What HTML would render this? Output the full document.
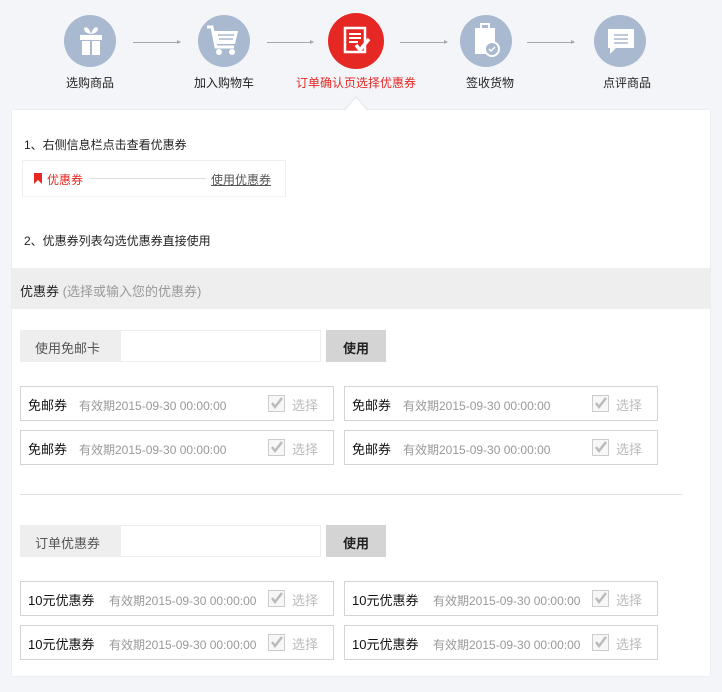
<!DOCTYPE html>
<html><head><meta charset="utf-8"><style>
*{margin:0;padding:0;box-sizing:border-box}
body{width:722px;height:692px;background:#f4f5f9;font-family:"Liberation Sans","Noto Sans CJK SC",sans-serif;font-size:12px;color:#222;position:relative;overflow:hidden}
.a{position:absolute}
.panel{left:12px;top:110px;width:698px;height:566px;background:#fff;box-shadow:0 0 2px #e0e2e8}
.c{border-radius:50%;background:#a9b9cf}
.lbl{top:74px;font-size:12px;width:140px;text-align:center}
.ar{height:1px;background:#a8a8a8;top:42px}
.ar:after{content:"";position:absolute;right:-1px;top:-2px;border-left:4px solid #a8a8a8;border-top:2.5px solid transparent;border-bottom:2.5px solid transparent}
.cp{width:314px;height:35px;border:1px solid #d4d4d4;background:#fff}
.cp .n{position:absolute;left:7px;top:8px;font-size:13px;color:#111}
.cp .d{position:absolute;top:10px;font-size:12px;color:#999}
.cp .s{position:absolute;right:15px;top:8px;font-size:13px;color:#bbb}
.cp svg{position:absolute;right:48px;top:8px}
.ip{height:32px}
</style></head><body>
<div class="a c" style="left:64px;top:15px;width:52px;height:52px"></div>
<svg class="a" style="left:78px;top:24px" width="26" height="34"><path d="M6 4q4-3 7 6q3-9 7-6q0 5-7 6q-7-1-7-6z" fill="#fff"/><rect x="2" y="11" width="22" height="5" fill="#fff"/><rect x="4" y="17" width="8" height="14" fill="#fff"/><rect x="14" y="17" width="8" height="14" fill="#fff"/></svg>
<div class="a c" style="left:198px;top:15px;width:52px;height:52px"></div>
<svg class="a" style="left:204px;top:24px" width="40" height="34"><path d="M3 3h5l4 20h18" stroke="#fff" stroke-width="3" fill="none"/><path d="M10 7h24l-3 13H13z" fill="#fff"/><path d="M14 11h16M15 15h14" stroke="#a9b9cf" stroke-width="1.5"/><circle cx="15" cy="28" r="3" fill="#fff"/><circle cx="28" cy="28" r="3" fill="#fff"/></svg>
<div class="a c" style="left:328px;top:13px;width:56px;height:56px;background:#e52824"></div>
<svg class="a" style="left:342px;top:26px" width="30" height="30"><rect x="3" y="2" width="20" height="24" fill="none" stroke="#fff" stroke-width="2.5"/><path d="M7 8h12M7 12h12M7 16h9" stroke="#fff" stroke-width="2"/><path d="M14 19l4 5 9-11" stroke="#fff" stroke-width="3.5" fill="none"/></svg>
<div class="a c" style="left:460px;top:15px;width:52px;height:52px"></div>
<svg class="a" style="left:472px;top:22px" width="30" height="36"><rect x="3" y="6" width="20" height="26" fill="#fff"/><rect x="9" y="2" width="8" height="7" fill="none" stroke="#fff" stroke-width="2"/><circle cx="20" cy="27" r="7" fill="#a9b9cf" stroke="#fff" stroke-width="2"/><path d="M17 27l2 2 4-4" stroke="#fff" stroke-width="1.5" fill="none"/></svg>
<div class="a c" style="left:594px;top:15px;width:52px;height:52px"></div>
<svg class="a" style="left:606px;top:27px" width="30" height="30"><path d="M2 2h26v19H10l-6 6v-6H2z" fill="#fff"/><path d="M8 8h14M8 12h14M8 16h14" stroke="#a9b9cf" stroke-width="1.5"/></svg>
<div class="a ar" style="left:133px;width:47px"></div>
<div class="a ar" style="left:267px;width:46px"></div>
<div class="a ar" style="left:400px;width:47px"></div>
<div class="a ar" style="left:527px;width:47px"></div>
<div class="a lbl" style="left:20px">选购商品</div>
<div class="a lbl" style="left:154px">加入购物车</div>
<div class="a lbl" style="left:286px;color:#e52824">订单确认页选择优惠券</div>
<div class="a lbl" style="left:420px">签收货物</div>
<div class="a lbl" style="left:557px">点评商品</div>
<div class="a panel"></div>
<svg class="a" style="left:344px;top:96px" width="24" height="15"><path d="M0 14.5L12 1l12 13.5" fill="#fff" stroke="#e3e5ea"/><rect x="1" y="14" width="22" height="2" fill="#fff"/></svg>
<div class="a" style="left:24px;top:136px">1、右侧信息栏点击查看优惠券</div>
<div class="a" style="left:22px;top:160px;width:264px;height:37px;border:1px solid #eee;border-bottom-color:#f3f3f3"></div>
<svg class="a" style="left:34px;top:173px" width="8" height="11"><path d="M0 0h8v11L4 7 0 11z" fill="#e52824"/></svg>
<div class="a" style="left:47px;top:171px;color:#e52824">优惠券</div>
<div class="a" style="left:90px;top:178px;width:116px;height:1px;background:#ddd"></div>
<div class="a" style="left:211px;top:171px;color:#555;text-decoration:underline">使用优惠券</div>
<div class="a" style="left:24px;top:232px">2、优惠券列表勾选优惠券直接使用</div>
<div class="a" style="left:12px;top:268px;width:698px;height:41px;background:#eee"></div>
<div class="a" style="left:20px;top:281px;font-size:13px">优惠券 <span style="color:#999">(选择或输入您的优惠券)</span></div>

<div class="a ip" style="left:20px;top:330px;width:100px;background:#eee;color:#555;font-size:13px;padding:8px 0 0 15px">使用免邮卡</div>
<div class="a ip" style="left:120px;top:330px;width:201px;border:1px solid #eee;background:#fff"></div>
<div class="a ip" style="left:326px;top:330px;width:60px;background:#d4d4d4;font-weight:bold;font-size:13px;text-align:center;padding-top:8px">使用</div>

<div class="a cp" style="left:20px;top:386px"><span class="n">免邮券</span><span class="d" style="left:58px">有效期2015-09-30 00:00:00</span><svg width="17" height="17"><rect x=".5" y=".5" width="16" height="16" fill="#f7f7f7" stroke="#ccc"/><path d="M4 8l3 4 7-9" stroke="#bbb" stroke-width="2.5" fill="none"/></svg><span class="s">选择</span></div>
<div class="a cp" style="left:344px;top:386px"><span class="n">免邮券</span><span class="d" style="left:58px">有效期2015-09-30 00:00:00</span><svg width="17" height="17"><rect x=".5" y=".5" width="16" height="16" fill="#f7f7f7" stroke="#ccc"/><path d="M4 8l3 4 7-9" stroke="#bbb" stroke-width="2.5" fill="none"/></svg><span class="s">选择</span></div>
<div class="a cp" style="left:20px;top:430px"><span class="n">免邮券</span><span class="d" style="left:58px">有效期2015-09-30 00:00:00</span><svg width="17" height="17"><rect x=".5" y=".5" width="16" height="16" fill="#f7f7f7" stroke="#ccc"/><path d="M4 8l3 4 7-9" stroke="#bbb" stroke-width="2.5" fill="none"/></svg><span class="s">选择</span></div>
<div class="a cp" style="left:344px;top:430px"><span class="n">免邮券</span><span class="d" style="left:58px">有效期2015-09-30 00:00:00</span><svg width="17" height="17"><rect x=".5" y=".5" width="16" height="16" fill="#f7f7f7" stroke="#ccc"/><path d="M4 8l3 4 7-9" stroke="#bbb" stroke-width="2.5" fill="none"/></svg><span class="s">选择</span></div>

<div class="a" style="left:20px;top:494px;width:662px;height:1px;background:#e2e2e2"></div>

<div class="a ip" style="left:20px;top:525px;width:100px;background:#eee;color:#555;font-size:13px;padding:8px 0 0 15px">订单优惠券</div>
<div class="a ip" style="left:120px;top:525px;width:201px;border:1px solid #eee;background:#fff"></div>
<div class="a ip" style="left:326px;top:525px;width:60px;background:#d4d4d4;font-weight:bold;font-size:13px;text-align:center;padding-top:8px">使用</div>

<div class="a cp" style="left:20px;top:581px"><span class="n">10元优惠券</span><span class="d" style="left:88px">有效期2015-09-30 00:00:00</span><svg width="17" height="17"><rect x=".5" y=".5" width="16" height="16" fill="#f7f7f7" stroke="#ccc"/><path d="M4 8l3 4 7-9" stroke="#bbb" stroke-width="2.5" fill="none"/></svg><span class="s">选择</span></div>
<div class="a cp" style="left:344px;top:581px"><span class="n">10元优惠券</span><span class="d" style="left:88px">有效期2015-09-30 00:00:00</span><svg width="17" height="17"><rect x=".5" y=".5" width="16" height="16" fill="#f7f7f7" stroke="#ccc"/><path d="M4 8l3 4 7-9" stroke="#bbb" stroke-width="2.5" fill="none"/></svg><span class="s">选择</span></div>
<div class="a cp" style="left:20px;top:625px"><span class="n">10元优惠券</span><span class="d" style="left:88px">有效期2015-09-30 00:00:00</span><svg width="17" height="17"><rect x=".5" y=".5" width="16" height="16" fill="#f7f7f7" stroke="#ccc"/><path d="M4 8l3 4 7-9" stroke="#bbb" stroke-width="2.5" fill="none"/></svg><span class="s">选择</span></div>
<div class="a cp" style="left:344px;top:625px"><span class="n">10元优惠券</span><span class="d" style="left:88px">有效期2015-09-30 00:00:00</span><svg width="17" height="17"><rect x=".5" y=".5" width="16" height="16" fill="#f7f7f7" stroke="#ccc"/><path d="M4 8l3 4 7-9" stroke="#bbb" stroke-width="2.5" fill="none"/></svg><span class="s">选择</span></div>
</body></html>
